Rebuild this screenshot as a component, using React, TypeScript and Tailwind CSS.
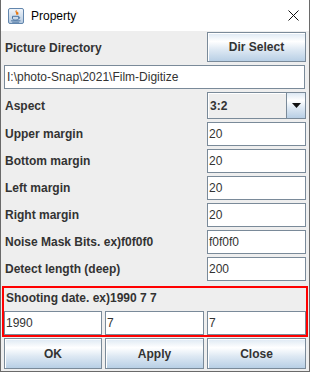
const btn =
  'flex items-center justify-center border border-[#7a8a99] bg-[linear-gradient(to_bottom,#dde8f3_0%,#ffffff_30%,#dde8f3_60%,#b8cfe5_100%)] shadow-[inset_1px_1px_0_#ffffff] text-[12px] font-bold text-[#333333]';

const field =
  'flex items-center border border-[#7a8a99] bg-white pl-[1px] text-[12px] text-[#333333]';

const JavaIcon = () => (
  <svg width="16" height="16" viewBox="0 0 16 16">
    <defs>
      <linearGradient id="jg" x1="0" y1="0" x2="0" y2="1">
        <stop offset="0" stopColor="#f2f6fb" />
        <stop offset="1" stopColor="#b3c8de" />
      </linearGradient>
    </defs>
    <rect x="0.5" y="0.5" width="15" height="15" rx="1.5" fill="url(#jg)" stroke="#6286ad" />
    <path d="M8.5 2.5c-2 1.6 1.6 2.4 0 4.2M10 4c-1.2 1 .8 1.4 -.4 2.6" fill="none" stroke="#e76f00" strokeWidth="1.1" />
    <path d="M4.5 8.3h6.2v2.2c0 1-1 1.6-3.1 1.6s-3.1-.6-3.1-1.6z" fill="none" stroke="#4a73a0" strokeWidth="1" />
    <path d="M10.7 9c1.4 0 1.4 1.5 0 1.6" fill="none" stroke="#4a73a0" strokeWidth="0.9" />
    <path d="M3 12.8h9.5M4.2 14.2h7" stroke="#4a73a0" strokeWidth="0.9" />
  </svg>
);

const rows: [string, string][] = [
  ['Upper margin', '20'],
  ['Bottom margin', '20'],
  ['Left margin', '20'],
  ['Right margin', '20'],
  ['Noise Mask Bits. ex)f0f0f0', 'f0f0f0'],
  ['Detect length (deep)', '200'],
];

export default function App() {
  return (
    <div className="w-[310px] h-[372px] flex flex-col border-x border-b border-[#6a6a6a] bg-white font-['Liberation_Sans',Arial,sans-serif]">
      {/* title bar */}
      <div className="h-[31px] shrink-0 flex items-center pl-[7px] pr-[10px]">
        <JavaIcon />
        <span className="ml-[7px] text-[12px] text-black">Property</span>
        <svg className="ml-auto" width="11" height="11" viewBox="0 0 11 11">
          <path d="M0.5 0.5l10 10M10.5 0.5l-10 10" stroke="#111111" strokeWidth="1" />
        </svg>
      </div>

      <div className="flex-1 bg-[#eeeeee] pl-[3px] pr-[2px] pt-[1px]">
        <div className="grid grid-cols-[98px_99px_99px] gap-x-[3px] h-[30px]">
          <div className="col-span-2 flex items-center pl-[1px] pt-[2px] text-[12px] font-bold text-[#333333]">
            Picture Directory
          </div>
          <button className={btn}>Dir Select</button>
        </div>

        <div className={`${field} mt-[3px] h-[24px] mr-[2px] pl-[2px]`}>I:\photo-Snap\2021\Film-Digitize</div>

        <div className="grid grid-cols-[98px_99px_99px] gap-x-[3px] h-[27px] mt-[3px]">
          <div className="col-span-2 flex items-center pl-[1px] text-[12px] font-bold text-[#333333]">Aspect</div>
          <div className="flex border border-[#7a8a99] bg-[#eeeeee]">
            <div className="flex-1 flex items-center pl-[2px] text-[12px] font-bold text-[#333333] shadow-[inset_1px_1px_0_#ffffff]">
              3:2
            </div>
            <div className="w-[19px] flex items-center justify-center border-l border-[#7a8a99] bg-[linear-gradient(to_bottom,#dde8f3_0%,#ffffff_30%,#dde8f3_60%,#b8cfe5_100%)]">
              <svg width="9" height="5" viewBox="0 0 9 5">
                <path d="M0 0h9L4.5 5z" fill="#111111" />
              </svg>
            </div>
          </div>
        </div>

        <div className="mt-[1px]">
          {rows.map(([label, value]) => (
            <div key={label} className="grid grid-cols-[98px_99px_99px] gap-x-[3px] h-[24px] mt-[3px]">
              <div className="col-span-2 flex items-center pl-[1px] text-[12px] font-bold text-[#333333] whitespace-nowrap">
                {label}
              </div>
              <div className={field}>{value}</div>
            </div>
          ))}
        </div>

        <div className="mt-[5px] -ml-[2px] mr-[0px] w-[306px] h-[51px] border-2 border-[#ff0000]">
          <div className="h-[23px] flex items-center pb-[3px] pl-[2px] text-[12px] font-bold text-[#333333]">
            Shooting date. ex)1990 7 7
          </div>
          <div className="grid grid-cols-[98px_99px_99px] gap-x-[3px] h-[24px]">
            <div className={field}>1990</div>
            <div className={field}>7</div>
            <div className={field}>7</div>
          </div>
        </div>

        <div className="grid grid-cols-[98px_99px_99px] gap-x-[3px] h-[31px] mt-[1px]">
          <button className={btn}>OK</button>
          <button className={btn}>Apply</button>
          <button className={btn}>Close</button>
        </div>
      </div>
    </div>
  );
}
